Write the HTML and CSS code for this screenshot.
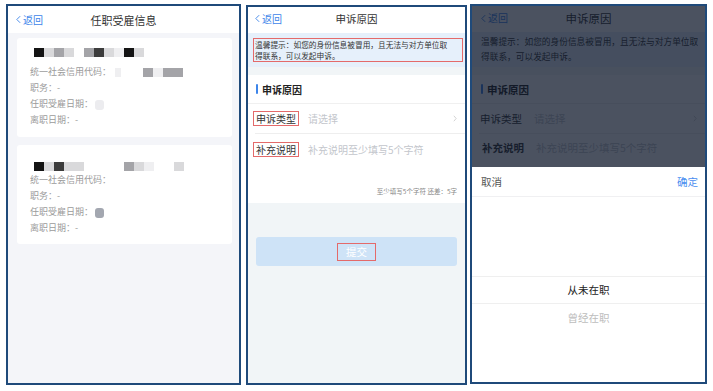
FILE: index.html
```html
<!DOCTYPE html>
<html lang="zh-CN">
<head>
    <meta charset="UTF-8">
    <meta name="viewport" content="width=device-width, initial-scale=1.0">
    <title>任职受雇信息 - 申诉</title>
    <link rel="stylesheet" href="styles.css">
</head>
<body>
    <div class="shots">
        <!-- 第一屏：任职受雇信息 -->
        <section class="phone phone-list">
            <header class="nav">
                <span class="back">
                    <svg viewBox="0 0 6 10"><path d="M5 1 L1 5 L5 9"/></svg>返回
                </span>
                <h1 class="nav-title">任职受雇信息</h1>
                <span></span>
            </header>

            <div class="card">
                <div class="mosaic">
                    <i class="px k"></i><i class="px l"></i><i class="px m"></i><i class="px l"></i>
                    <i class="px gap"></i>
                    <i class="px m"></i><i class="px d"></i><i class="px l"></i><i class="px f"></i><i class="px k"></i><i class="px l"></i>
                </div>
                <p class="field">统一社会信用代码：<span class="mosaic inline"><i class="px f narrow"></i><i class="px gap wide"></i><i class="px m"></i><i class="px f"></i><i class="px m"></i><i class="px m"></i></span></p>
                <p class="field">职务：-</p>
                <p class="field">任职受雇日期：<span class="blob faint"></span></p>
                <p class="field">离职日期：-</p>
            </div>

            <div class="card card-alt">
                <div class="mosaic">
                    <i class="px k"></i><i class="px l"></i><i class="px d"></i><i class="px l"></i><i class="px l"></i>
                    <i class="px gap"></i><i class="px gap"></i><i class="px gap"></i><i class="px gap"></i>
                    <i class="px m"></i><i class="px l"></i><i class="px f"></i>
                    <i class="px gap"></i><i class="px gap"></i>
                    <i class="px l"></i>
                </div>
                <p class="field">统一社会信用代码：</p>
                <p class="field">职务：-</p>
                <p class="field">任职受雇日期：<span class="blob"></span></p>
                <p class="field">离职日期：-</p>
            </div>
        </section>

        <!-- 第二屏：申诉原因 -->
        <section class="phone phone-form">
            <header class="nav">
                <span class="back">
                    <svg viewBox="0 0 6 10"><path d="M5 1 L1 5 L5 9"/></svg>返回
                </span>
                <h1 class="nav-title">申诉原因</h1>
                <span></span>
            </header>

            <div class="tip">
                <p class="marked">温馨提示：如您的身份信息被冒用，且无法与对方单位取<br>得联系，可以发起申诉。</p>
            </div>

            <div class="form">
                <div class="section-head"><span class="bar"></span>申诉原因</div>
                <div class="row">
                    <span class="label marked">申诉类型</span>
                    <span class="placeholder">请选择</span>
                    <svg class="arrow" viewBox="0 0 5 9"><path d="M1 1 L4 4.5 L1 8"/></svg>
                </div>
                <div class="row-text">
                    <div class="row-line">
                        <span class="label marked">补充说明</span>
                        <span class="placeholder">补充说明至少填写5个字符</span>
                    </div>
                    <div class="counter">至少填写5个字符 还差：5字</div>
                </div>
            </div>

            <div class="submit"><span class="marked">提交</span></div>
        </section>

        <!-- 第三屏：申诉类型选择 -->
        <section class="phone phone-picker">
            <header class="nav">
                <span class="back">
                    <svg viewBox="0 0 6 10"><path d="M5 1 L1 5 L5 9"/></svg>返回
                </span>
                <h1 class="nav-title">申诉原因</h1>
                <span></span>
            </header>

            <div class="tip">
                <p>温馨提示：如您的身份信息被冒用，且无法与对方单位取<br>得联系，可以发起申诉。</p>
            </div>

            <div class="form">
                <div class="section-head"><span class="bar"></span>申诉原因</div>
                <div class="row">
                    <span class="label">申诉类型</span>
                    <span class="placeholder">请选择</span>
                    <svg class="arrow" viewBox="0 0 5 9"><path d="M1 1 L4 4.5 L1 8"/></svg>
                </div>
                <div class="row-text">
                    <div class="row-line">
                        <span class="label strong">补充说明</span>
                        <span class="placeholder">补充说明至少填写5个字符</span>
                    </div>
                </div>
            </div>

            <div class="overlay">
                <div class="mask"></div>
                <div class="sheet">
                    <div class="sheet-head">
                        <span class="cancel">取消</span>
                        <span class="confirm">确定</span>
                    </div>
                    <ul class="picker">
                        <li class="picked">从未在职</li>
                        <li>曾经在职</li>
                    </ul>
                </div>
            </div>
        </section>
    </div>
</body>
</html>
```

FILE: styles.css
```css
* {
    margin: 0;
    padding: 0;
    box-sizing: border-box;
}

body {
    font-family: "Noto Sans CJK SC", "Noto Sans", sans-serif;
    background: #fff;
    width: 713px;
    height: 391px;
    overflow: hidden;
}

.shots {
    display: flex;
    align-items: flex-start;
    gap: 5px;
    padding: 4px 0 0 6px;
}

.phone {
    position: relative;
    display: flex;
    flex-direction: column;
    height: 381px;
    border: 2px solid #1f4a7a;
    overflow: hidden;
}

.phone-list {
    width: 235px;
    background: #f4f5f9;
}

.phone-form {
    width: 221px;
    height: 380px;
    margin-top: 1px;
    background: #f1f5f7;
}

.phone-picker {
    width: 237px;
    height: 380px;
    margin-left: -2px;
    background: #f1f5f7;
}

/* barre de navigation */
.nav {
    display: grid;
    grid-template-columns: 1fr auto 1fr;
    align-items: center;
    height: 27px;
    padding: 0 8px;
    background: #fff;
}

.phone-form .nav {
    height: 26px;
    padding: 0 7px 3px;
}

.phone-picker .nav {
    height: 26px;
    padding: 0 9px 2px;
}

.back {
    display: flex;
    align-items: center;
    gap: 2px;
    color: #3d85ea;
    font-size: 10px;
    line-height: 12px;
}

.back svg {
    width: 5px;
    height: 9px;
    fill: none;
    stroke: currentColor;
    stroke-width: 1.1;
}

.nav-title {
    font-size: 11px;
    font-weight: normal;
    color: #333;
}

.phone-form .nav-title {
    font-size: 10.5px;
}

.phone-picker .nav-title {
    font-size: 11.5px;
}

/* cartes */
.card {
    margin: 5px 7px 0 9px;
    padding: 9px 13px 9px;
    background: #fff;
    border-radius: 3px;
}

.card-alt {
    margin-top: 8px;
    padding-top: 16px;
    padding-bottom: 8px;
}

.mosaic {
    display: flex;
    align-items: center;
    height: 10px;
    padding-left: 4px;
    margin-bottom: 7px;
}

.card-alt .mosaic {
    margin-bottom: 1px;
}

.mosaic.inline {
    display: inline-flex;
    vertical-align: middle;
    height: 9px;
    margin: 0 0 0 4px;
    padding: 0;
}

.px {
    display: block;
    width: 10px;
    height: 9px;
}

.px.k { background: #141414; }
.px.d { background: #3c3c3c; }
.px.m { background: #a4a4a8; }
.px.l { background: #d9d9db; }
.px.f { background: #efeff1; }
.px.gap { background: transparent; }
.px.narrow { width: 6px; }
.px.wide { width: 22px; }

.field {
    font-size: 9px;
    line-height: 16px;
    color: #9b9b9b;
}

.blob {
    display: inline-block;
    width: 9px;
    height: 10px;
    margin-left: 2px;
    vertical-align: middle;
    background: #a3a7b0;
    border-radius: 3px;
}

.blob.faint {
    background: #ececef;
}

/* formulaire */
.tip {
    padding: 5px 2px 5px 5px;
    background: #e6f0fb;
}

.tip p {
    padding: 0 1px;
    font-size: 7.7px;
    line-height: 11px;
    color: #333;
    white-space: nowrap;
    overflow: hidden;
}

.phone-picker .tip {
    padding: 2px 7px 3px 9px;
}

.phone-picker .tip p {
    padding: 0;
    font-size: 8.7px;
    line-height: 15px;
}

.form {
    margin-top: 8px;
    background: #fff;
}

.section-head {
    display: flex;
    align-items: center;
    gap: 4px;
    height: 29px;
    padding-left: 8px;
    border-bottom: 1px solid #f0f0f0;
    font-size: 10px;
    font-weight: bold;
    color: #222;
}

.phone-picker .section-head {
    padding-left: 9px;
    font-size: 10.5px;
}

.bar {
    width: 2px;
    height: 10px;
    background: #3d85ea;
    border-radius: 1px;
}

.row {
    display: flex;
    align-items: center;
    height: 30px;
    margin-left: 7px;
    padding: 0 8px 0 0;
    border-bottom: 1px solid #eeeeee;
}

.row .label {
    margin-left: -2px;
}

.label {
    padding: 0 2px;
    border: 1px solid transparent;
    font-size: 10px;
    line-height: 13px;
    color: #333;
}

.label.strong {
    font-weight: bold;
}

.marked,
.label.marked {
    border: 1px solid #e46a6a;
}

.placeholder {
    margin-left: 9px;
    font-size: 10px;
    line-height: 13px;
    color: #c3c6cc;
}

.arrow {
    width: 4px;
    height: 7px;
    margin-left: auto;
    fill: none;
    stroke: #c8c8c8;
    stroke-width: 1;
}

.row-text {
    display: flex;
    flex-direction: column;
    height: 69px;
    padding: 8px 8px 7px 5px;
}

.row-line {
    display: flex;
    align-items: center;
}

.counter {
    margin-top: auto;
    text-align: right;
    font-size: 6.5px;
    line-height: 10px;
    color: #888;
}

.phone-picker .row,
.phone-picker .row-text {
    margin-left: 7px;
    padding-left: 0;
}

.phone-picker .row-text {
    padding-top: 6px;
}

.phone-picker .label,
.phone-picker .placeholder {
    font-size: 10.5px;
}

.submit {
    display: flex;
    align-items: center;
    justify-content: center;
    height: 29px;
    margin: 34px 8px 0;
    background: #cee3f7;
    border-radius: 3px;
}

.submit span {
    padding: 2px 8px;
    font-size: 10.5px;
    line-height: 12px;
    color: #fff;
}

/* sélecteur */
.overlay {
    position: absolute;
    inset: 0;
    display: flex;
    flex-direction: column;
}

.mask {
    flex: 1;
    background: rgba(15, 24, 43, 0.75);
}

.sheet {
    height: 215px;
    background: #fff;
}

.sheet-head {
    display: flex;
    align-items: center;
    justify-content: space-between;
    height: 30px;
    padding: 0 7px 0 9px;
    border-bottom: 1px solid #f0f0f2;
    font-size: 10.5px;
}

.cancel {
    color: #555;
}

.confirm {
    color: #4a8ef0;
}

.picker {
    list-style: none;
    padding-top: 79px;
}

.picker li {
    height: 27px;
    line-height: 27px;
    text-align: center;
    font-size: 10.5px;
    color: #bdbdbd;
}

.picker li.picked {
    height: 28px;
    border-top: 1px solid #efefef;
    border-bottom: 1px solid #efefef;
    line-height: 26px;
    color: #222;
}
```
